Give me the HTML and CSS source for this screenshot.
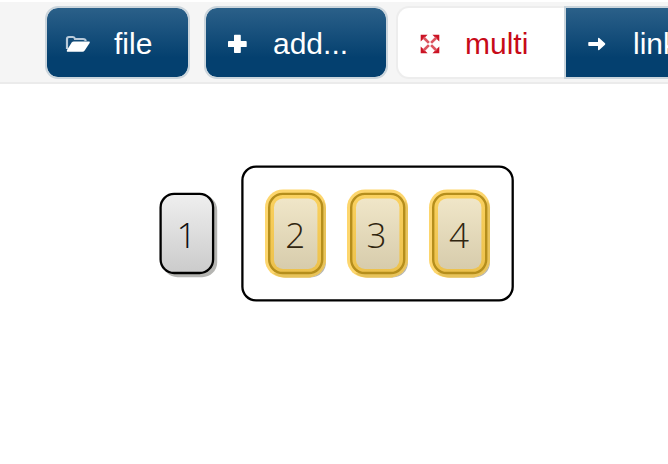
FILE: index.html
```html
<!DOCTYPE html>
<html lang="en">
<head>
<meta charset="utf-8">
<title>Cards</title>
<link rel="stylesheet" href="styles.css">
</head>
<body>
<header class="toolbar">
  <button class="btn btn-file">
    <svg class="icon" width="26" height="18" viewBox="0 0 26 18"><path d="M2 14V4Q2 2 4 2H8Q9.5 2 10 4H18Q20.5 4 20.8 6" fill="none" stroke="#b9cad9" stroke-width="2.2"/><path d="M8.8 6.5H24.3Q25.3 6.8 24.6 8L19.7 15.5Q18.8 16.7 17.5 16.7H2.2Q1.3 16.2 2 15L6.7 7.5Q7.4 6.5 8.8 6.5Z" fill="#fff"/></svg>
    <span>file</span>
  </button>
  <button class="btn btn-add">
    <svg class="icon" width="20" height="20" viewBox="0 0 20 20"><path d="M7.7 .8h5.4q.7 0 .7 .7v5.6h5.1q.8 0 .8 .7v4.6q0 .7-.8 .7h-5.1v5.2q0 .8-.7 .8h-5.4q-.7 0-.7-.8v-5.2H1.8q-.8 0-.8-.7V7.8q0-.7.8-.7H7V1.5q0-.7.7-.7z" fill="#fff"/></svg>
    <span>add...</span>
  </button>
  <div class="group">
    <button class="btn btn-multi">
      <svg class="icon" width="20" height="20" viewBox="0 0 20 20"><path d="M.7 .7H7.6L.7 7.6ZM12.4 .7H19.3V7.6ZM.7 12.4L7.6 19.3H.7ZM19.3 12.4V19.3H12.4Z" fill="#cb1324"/><path d="M3.5 3.5L8.9 8.9M16.5 3.5L11.1 8.9M3.5 16.5L8.9 11.1M16.5 16.5L11.1 11.1" stroke="#dc5560" stroke-width="2.7"/></svg>
      <span>multi</span>
    </button>
    <button class="btn btn-link">
      <svg class="icon" width="20" height="16" viewBox="0 0 20 16"><path d="M1.5 6H11V2.4Q11.2 1.4 12.2 2L18 7.2Q18.6 8 18 8.8L12.2 14Q11.2 14.6 11 13.6V10H1.5Q.9 8 1.5 6Z" fill="#fff"/></svg>
      <span>link</span>
    </button>
  </div>
</header>
<main class="board">
  <svg class="defs" width="0" height="0">
    <defs>
      <linearGradient id="face" x1="0" y1="0" x2="0" y2="1"><stop offset="0" stop-color="#efefef"/><stop offset="1" stop-color="#cbcbcb"/></linearGradient>
      <linearGradient id="gold" x1="0" y1="0" x2="0" y2="1"><stop offset="0" stop-color="#f0e6c8"/><stop offset="1" stop-color="#d7ccac"/></linearGradient>
      <linearGradient id="rim" x1="0" y1="0" x2="0" y2="1"><stop offset="0" stop-color="#fad15f"/><stop offset="1" stop-color="#ecc14c"/></linearGradient>
    </defs>
  </svg>
  <svg class="card" width="64" height="92" viewBox="0 0 64 92">
    <rect x="6.5" y="7" width="54.7" height="82.2" rx="15" fill="#b5b5b2"/>
    <rect x="4.6" y="5.9" width="52.5" height="79.1" rx="13.5" fill="url(#face)" stroke="#000" stroke-width="2.3"/>
    <text x="30.5" y="59.5">1</text>
  </svg>
  <section class="tray">
    <svg class="frame" width="273" height="137" viewBox="0 0 273 137"><rect x="1.4" y="1.7" width="270.3" height="133.6" rx="13.5" fill="none" stroke="#000" stroke-width="2.3"/></svg>
    <svg class="card picked" width="64" height="92" viewBox="0 0 64 92">
      <rect x="7" y="7" width="55" height="82.5" rx="15" fill="#b5b5b2"/>
      <rect x="1" y="1.4" width="61" height="88" rx="18" fill="#fdd66d"/>
      <path d="M59 12Q62 16 62 21V71Q61 86 46 89.4H20Q13 89 9 85H45Q59 84 59 70Z" fill="#e8c35a"/>
      <rect x="5.2" y="5.9" width="53" height="79.1" rx="13.5" fill="url(#rim)" stroke="#b58e1c" stroke-width="2.4"/>
      <rect x="10" y="10.4" width="43.4" height="70.6" rx="9" fill="url(#gold)"/>
      <text x="31.3" y="59.5">2</text>
    </svg>
    <svg class="card picked" width="64" height="92" viewBox="0 0 64 92">
      <rect x="7" y="7" width="55" height="82.5" rx="15" fill="#b5b5b2"/>
      <rect x="1" y="1.4" width="61" height="88" rx="18" fill="#fdd66d"/>
      <path d="M59 12Q62 16 62 21V71Q61 86 46 89.4H20Q13 89 9 85H45Q59 84 59 70Z" fill="#e8c35a"/>
      <rect x="5.2" y="5.9" width="53" height="79.1" rx="13.5" fill="url(#rim)" stroke="#b58e1c" stroke-width="2.4"/>
      <rect x="10" y="10.4" width="43.4" height="70.6" rx="9" fill="url(#gold)"/>
      <text x="30.5" y="59.5">3</text>
    </svg>
    <svg class="card picked" width="64" height="92" viewBox="0 0 64 92">
      <rect x="7" y="7" width="55" height="82.5" rx="15" fill="#b5b5b2"/>
      <rect x="1" y="1.4" width="61" height="88" rx="18" fill="#fdd66d"/>
      <path d="M59 12Q62 16 62 21V71Q61 86 46 89.4H20Q13 89 9 85H45Q59 84 59 70Z" fill="#e8c35a"/>
      <rect x="5.2" y="5.9" width="53" height="79.1" rx="13.5" fill="url(#rim)" stroke="#b58e1c" stroke-width="2.4"/>
      <rect x="10" y="10.4" width="43.4" height="70.6" rx="9" fill="url(#gold)"/>
      <text x="31" y="59.5">4</text>
    </svg>
  </section>
</main>
</body>
</html>
```
FILE: styles.css
```css
* { box-sizing: border-box; }
body {
  margin: 0;
  height: 464px;
  overflow: hidden;
  background: #fff;
}
.toolbar {
  display: flex;
  height: 84px;
  padding: 4px 0 0 45px;
  border-top: 2px solid #fff;
  border-bottom: 2px solid #ebebeb;
  background: #f5f5f5;
  overflow: hidden;
}
.btn {
  display: flex;
  flex: none;
  align-items: center;
  height: 73px;
  padding: 0;
  border: 2px solid #cbd5dc;
  border-radius: 13px;
  background: linear-gradient(#2b6089, #04406f 72%);
  background-clip: padding-box;
  color: #fff;
  font: 30px/36px "Liberation Sans", Arial, sans-serif;
  white-space: nowrap;
}
.btn span { padding-top: 2px; }
.icon { flex: none; display: block; margin-top: 2px; }
.btn-file { width: 145px; margin-right: 14px; padding-left: 18px; }
.btn-file span { margin-left: 23px; }
.btn-add { width: 184px; margin-right: 8px; padding-left: 21px; }
.btn-add span { margin-left: 26px; }
.group { display: flex; flex: none; }
.btn-multi {
  width: 168px;
  padding-left: 22px;
  border-color: #ededed;
  border-right: 0;
  border-radius: 13px 0 0 13px;
  background: #fff;
  color: #c70a18;
}
.btn-multi span { margin-left: 25px; }
.btn-link { width: 170px; padding-left: 21px; border-radius: 0; }
.btn-link span { margin-left: 26px; }
.board { display: flex; align-items: flex-start; padding: 81px 0 0 156px; }
.defs { position: absolute; }
.card { display: block; flex: none; margin-top: 23px; }
.card text {
  font: 300 35px "Open Sans", sans-serif;
  text-anchor: middle;
  fill: #111;
}
.picked text { fill: #30250f; }
.tray {
  position: relative;
  display: flex;
  gap: 18px;
  width: 273px;
  height: 137px;
  margin-left: 21px;
  padding-left: 23px;
}
.frame { position: absolute; inset: 0; }
```
